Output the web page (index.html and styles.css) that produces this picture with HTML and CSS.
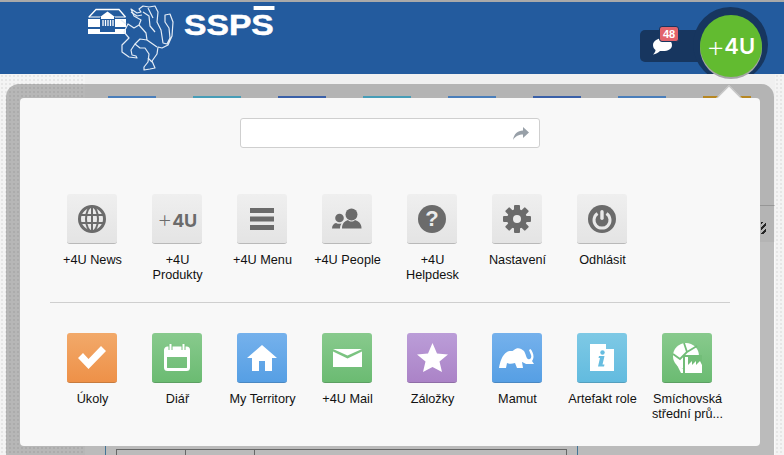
FILE: index.html
```html
<!DOCTYPE html>
<html lang="cs">
<head>
<meta charset="utf-8">
<title>+4U</title>
<link rel="stylesheet" href="styles.css">
</head>
<body>
<div class="page">
  <header class="header">
    <a class="logo">
      <svg class="crest" width="90" height="72" viewBox="88 0 90 72">
        <path d="M89 17 L96 9.500 H119 L125.500 17" fill="none" stroke="#fff" stroke-width="1.300"/>
        <path d="M88.500 17 H125.500" stroke="#fff" stroke-width="1"/>
        <rect x="88" y="19" width="38" height="8" fill="#fff"/>
        <rect x="88" y="29" width="38" height="5" fill="#fff"/>
        <rect x="100" y="16" width="15" height="16" fill="#235b9e"/>
        <path d="M100 17 L107.500 11.500 L115 17 Z" fill="#fff"/>
        <rect x="101" y="17" width="13" height="2" fill="#fff"/>
        <path d="M103 20 V26 M105.500 20 V26 M108 20 V26 M110.500 20 V26 M113 20 V26" stroke="#fff" stroke-width="1.300"/>
        <g fill="none" stroke="#e4ecf5" stroke-width="1.200" stroke-linejoin="round">
          <path d="M131 9 L137 13 L141 12 L139 9 L143 6 L149 7 L155 6 L158 12 L157 22 L161 30 L163 43 L167 44 L170 38 L169 28 L165 22 L165 15 L170 14 L173 22 L172 36 L168 45 L162 48 L158 47 L157 54 L152 61 L155 68 L150 69 L144 70 L144 67 L148 62 L149 54 L145 48 L140 48 L135 44 L131 50 L132 55 L136 56 L137 58 L129 57 L122 52 L122 45 L129 38 L124 32 L128 24 L134 28 L139 25 L141 20 L134 16 Z"/>
          <path d="M143 12 L149 16 L150 26 L155 32 M139 25 L146 33 L147 40 L157 47 M135 44 L140 39 L147 40 M148 8 L153 18 M152 62 L148 58"/>
          <path d="M131 12 L137 16 L142 15 M126 24 L121 20"/>
        </g>
      </svg>
      <span class="wordmark">SSPS</span>
    </a>
    <div class="actions">
      <div class="messages">
        <svg class="bubble" width="19" height="17" viewBox="0 0 19 17">
          <path d="M10 0 C15 0 19 3 19 7 C19 11 15 13 10 13 C9 13 8 13 7 13 C5 15 3 16 0 16.500 C1.500 15 2.500 13.500 2.500 12 C1 11 0 9 0 7 C0 3 5 0 10 0 Z" fill="#fff"/>
        </svg>
        <span class="badge">48</span>
      </div>
      <div class="orb"><span class="orb-inner"><span class="plus">+</span>4U</span></div>
    </div>
  </header>
  <div class="backdrop">
    <div class="texture"></div>
    <main class="main">
      <div class="tabs">
        <i class="tab blue"></i><i class="tab teal"></i><i class="tab navy"></i><i class="tab teal"></i>
        <i class="tab blue"></i><i class="tab navy"></i><i class="tab blue"></i><i class="tab amber"></i>
      </div>
      <div class="rule"></div>
      <div class="hatch"></div>
      <div class="lower">
        <div class="grid-lines">
          <span class="blue-tick"></span>
          <span class="blue-tick second"></span>
          <div class="grid-table"><i></i><i></i><i></i></div>
        </div>
      </div>
    </main>
    <div class="texture narrow"></div>
  </div>

  <div class="overlay">
    <div class="pointer"></div>
    <section class="panel">
      <div class="search">
        <input class="search-input" type="text" aria-label="Hledat">
        <svg class="search-go" width="16" height="13" viewBox="0 0 16 13">
          <path d="M10 0 L16 5.500 L10 11 V7.500 C6 7.500 2.500 9 0 13 C1 7 4.500 3.500 10 3.500 Z" fill="#98a0a8"/>
        </svg>
      </div>

      <ul class="row system">
        <li class="item"><span class="tile grey">
          <svg width="28" height="28" viewBox="0 0 28 28" fill="none" stroke="#6b6b6b"><circle cx="14" cy="14" r="12.500" stroke-width="3"/><ellipse cx="14" cy="14" rx="6" ry="12.500" stroke-width="2"/><path d="M14 2 V26 M2.500 10 H25.500 M2.500 18 H25.500" stroke-width="2"/></svg>
        </span><span class="label">+4U News</span></li>
        <li class="item"><span class="tile grey">
          <span class="mini-brand"><span class="plus">+</span>4U</span>
        </span><span class="label">+4U Produkty</span></li>
        <li class="item"><span class="tile grey">
          <svg width="24" height="22" viewBox="0 0 24 22" fill="#6b6b6b"><rect width="24" height="5"/><rect y="8.500" width="24" height="5"/><rect y="17" width="24" height="5"/></svg>
        </span><span class="label">+4U Menu</span></li>
        <li class="item"><span class="tile grey">
          <svg width="30" height="21" viewBox="0 0 30 21" fill="#6b6b6b"><circle cx="19.500" cy="6.500" r="6"/><path d="M10 20.500 C10 15 13 13 16 12 C18 14 21 14 23 12 C26 13 29.500 15 29.500 20.500 Z"/><circle cx="7.500" cy="10" r="4.300"/><path d="M0 20.500 C0 17 2 15.500 4 15 C6 16 8 16 9.500 15.500 C8.500 17 8 18.500 8 20.500 Z"/></svg>
        </span><span class="label">+4U People</span></li>
        <li class="item"><span class="tile grey">
          <span class="help">?</span>
        </span><span class="label">+4U Helpdesk</span></li>
        <li class="item"><span class="tile grey">
          <svg width="28" height="28" viewBox="0 0 28 28"><g fill="#6b6b6b"><circle cx="14" cy="14" r="10"/><rect x="11" y="0" width="6" height="28" rx="1"/><rect x="11" y="0" width="6" height="28" rx="1" transform="rotate(45 14 14)"/><rect x="11" y="0" width="6" height="28" rx="1" transform="rotate(90 14 14)"/><rect x="11" y="0" width="6" height="28" rx="1" transform="rotate(135 14 14)"/></g><circle cx="14" cy="14" r="4" fill="#ebebeb"/></svg>
        </span><span class="label">Nastavení</span></li>
        <li class="item"><span class="tile grey">
          <svg width="28" height="28" viewBox="0 0 28 28"><circle cx="14" cy="14" r="14" fill="#6b6b6b"/><path d="M9.500 8.500 A8 8 0 1 0 18.500 8.500" fill="none" stroke="#e8e8e8" stroke-width="3"/><rect x="12.300" y="5" width="3.400" height="10" rx="1.700" fill="#e8e8e8"/></svg>
        </span><span class="label">Odhlásit</span></li>
      </ul>

      <div class="divider"></div>

      <ul class="row apps">
        <li class="item"><span class="tile orange">
          <svg width="28" height="23" viewBox="0 0 28 23"><path d="M0 12 L5 7 L10.500 13 L23 0 L28 5 L10.500 23 Z" fill="#fff"/></svg>
        </span><span class="label">Úkoly</span></li>
        <li class="item"><span class="tile green">
          <svg width="26" height="27" viewBox="0 0 26 27"><path d="M3.500 4 H22.500 A2 2 0 0 1 24.500 6 V23.500 A2 2 0 0 1 22.500 25.500 H3.500 A2 2 0 0 1 1.500 23.500 V6 A2 2 0 0 1 3.500 4 Z" fill="none" stroke="#fff" stroke-width="3"/><rect x="1" y="4" width="24" height="9" fill="#fff"/><rect x="4.500" y="0" width="4" height="6" fill="#78c07e"/><rect x="17.500" y="0" width="4" height="6" fill="#78c07e"/><rect x="5.500" y="0" width="2" height="6" fill="#fff"/><rect x="18.500" y="0" width="2" height="6" fill="#fff"/></svg>
        </span><span class="label">Diář</span></li>
        <li class="item"><span class="tile blue-t">
          <svg width="30" height="26" viewBox="0 0 30 26"><path d="M15 0 L30 13 H25 V26 H18 V16 H12 V26 H5 V13 H0 Z" fill="#fff"/></svg>
        </span><span class="label">My Territory</span></li>
        <li class="item"><span class="tile green">
          <svg width="29" height="18" viewBox="0 0 29 18" fill="#fff"><path d="M0 0 H29 L14.500 6.500 Z"/><path d="M0 2.500 L14.500 9.500 L29 2.500 V18 H0 Z"/></svg>
        </span><span class="label">+4U Mail</span></li>
        <li class="item"><span class="tile purple">
          <svg width="31" height="29" viewBox="0 0 31 29"><path d="M15.500 0 L20 10.500 L31 11.500 L22.500 18.500 L25 29 L15.500 24 L6 29 L8.500 18.500 L0 11.500 L11 10.500 Z" fill="#fff"/></svg>
        </span><span class="label">Záložky</span></li>
        <li class="item"><span class="tile blue-t">
          <svg width="36" height="21" viewBox="0 0 36 21"><path d="M0 21 C1 15 3 8 8 5 C11 3 13 5 15 3 C18 0 22 1 25 4 C27 7 27 11 29 12 C31 13 33 11 32 8 L30 3 L31.500 2 C34 5 36 10 33 14 L35 17 H27 C25 16 24 15 23 15 L24 21 H18 L16 16 C13 17 10 17 8 16 L7 21 Z" fill="#fff"/></svg>
        </span><span class="label">Mamut</span></li>
        <li class="item"><span class="tile sky">
          <svg width="24" height="27" viewBox="0 0 24 27"><path d="M0 0 H16 V5 H24 V27 H0 Z" fill="#fff"/><circle cx="12.500" cy="8.500" r="2.200" fill="#67bde0"/><path d="M9 12 H14.500 L12.500 20.500 H14.500 L14 22.500 H8 L10 14 H8.500 Z" fill="#67bde0"/></svg>
        </span><span class="label">Artefakt role</span></li>
        <li class="item"><span class="tile green">
          <svg width="30" height="30" viewBox="0 0 30 30"><circle cx="14" cy="13" r="13" fill="#fff"/><path d="M12 0 L15 9 L8 16 L1 11 M15 9 L25 3" fill="none" stroke="#72bd78" stroke-width="1.800"/><path d="M11 12 H30 V30 H11 Z" fill="#72bd78"/><path d="M13 30 V14 H16 V22 L20 18 V22 L24 18 V22 L28 18 L30 22 V30 Z" fill="#fff"/><path d="M5 22 L11 26 V30 H9 Z" fill="#fff"/></svg>
        </span><span class="label two-line">Smíchovská střední prů...</span></li>
      </ul>
    </section>
  </div>
</div>
</body>
</html>
```
FILE: styles.css
```css
* { box-sizing: border-box; }
html, body { margin: 0; height: 100%; }
body {
  font-family: "Liberation Sans", Arial, sans-serif;
  overflow: hidden;
  background: #f0f0f0;
}
.page { position: relative; width: 784px; height: 455px; overflow: hidden; display: flex; flex-direction: column; }

.header {
  flex: none;
  height: 74px;
  border-top: 2px solid #a9a9a9;
  background: #235b9e;
  display: flex;
  justify-content: space-between;
  padding-left: 88px;
  position: relative;
  z-index: 3;
}
.logo { display: flex; align-items: flex-start; }
.crest { margin-top: -2px; flex: none; }
.wordmark {
  position: relative;
  margin-left: 6px;
  margin-top: 5px;
  width: 78px;
  color: #fff;
  font: 700 29px/36px "Liberation Sans", sans-serif;
  -webkit-text-stroke: 0.5px #fff;
  white-space: nowrap;
  transform: scaleX(1.160);
  transform-origin: left top;
}
.wordmark::before {
  content: "";
  position: absolute;
  right: 0;
  top: -1px;
  width: 18px;
  height: 4px;
  background: #fff;
}
.actions { display: flex; align-items: flex-start; padding-right: 16px; }
.messages {
  position: relative;
  margin-top: 28px;
  width: 68px;
  height: 32px;
  background: #17365f;
  border-radius: 5px;
  margin-right: -15px;
}
.bubble { position: absolute; left: 13px; top: 8px; }
.badge {
  position: absolute;
  left: 19px;
  top: -4px;
  width: 20px;
  height: 16px;
  background: #e2636b;
  border: 1px solid #17365f;
  border-radius: 3px;
  color: #fff;
  font: 700 11px/14px "Liberation Sans", sans-serif;
  text-align: center;
}
.orb {
  position: relative;
  width: 75px;
  height: 75px;
  margin-top: 5px;
  padding-top: 8px;
  flex: none;
}
.orb::before {
  content: "";
  position: absolute;
  inset: 0;
  border-radius: 50%;
  background: #17365f;
  clip-path: inset(0 0 8px 0);
}
.orb-inner {
  position: relative;
  display: flex;
  width: 62px;
  height: 62px;
  margin: 0 auto;
  align-items: center;
  justify-content: center;
  background: #62bb30;
  border-radius: 50%;
  color: #fff;
  font: 600 22px/1 "Inter", "Liberation Sans", sans-serif;
  box-shadow: 0 2px 0 #a5a5a5;
}
.orb-inner .plus { font-size: 30px; font-weight: 200; margin-right: -1px; }

.backdrop { flex: 1; display: flex; min-height: 0; }
.texture {
  width: 85px;
  flex: none;
  background-color: #f4f4f4;
  background-image: radial-gradient(#e6e6e6 1px, transparent 1.500px);
  background-size: 4px 4px;
}
.texture.narrow { width: 9px; }
.main { flex: 1; background: #f0f0f0; position: relative; display: flex; flex-direction: column; }
.tabs { display: flex; gap: 37px; margin: 22px 0 0 23px; flex: none; }
.tab { display: block; width: 48px; height: 2px; }
.tab.blue { background: #63a9f8; }
.tab.teal { background: #5fd2f5; }
.tab.navy { background: #4e80e0; }
.tab.amber { background: #f5b52e; }
.rule { height: 1px; background: #c9c9c9; margin-top: 107px; flex: none; }
.hatch {
  align-self: flex-end;
  width: 5px;
  height: 12px;
  margin: 16px 9px 0 0;
  background: repeating-linear-gradient(135deg, #333 0 2px, transparent 2px 4px);
  flex: none;
}
.lower { flex: 1; background: #fafafa; margin-top: 8px; position: relative; }
.grid-lines { position: absolute; left: 0; right: 0; bottom: 0; height: 9px; }
.blue-tick { position: absolute; left: 20px; top: 0; bottom: 0; width: 1px; background: #5a9bc9; }
.blue-tick.second { left: 492px; }
.grid-table {
  position: absolute;
  left: 31px;
  width: 451px;
  top: 3px;
  bottom: 0;
  border-top: 1px solid #8a8a8a;
  border-right: 1px solid #8a8a8a;
  display: flex;
}
.grid-table i { width: 69px; border-left: 1px solid #8a8a8a; display: block; }

.overlay {
  position: absolute;
  left: 6px;
  top: 84px;
  width: 768px;
  height: 380px;
  background: rgba(0, 0, 0, 0.25);
  border-radius: 13px 13px 0 0;
  padding: 14px 14px 18px;
  z-index: 2;
}
.pointer {
  position: absolute;
  left: 714px;
  top: 5px;
  width: 18px;
  height: 18px;
  background: #f8f8f8;
  transform: rotate(45deg);
  border-top: 1px solid #c4c4c4;
  border-left: 1px solid #c4c4c4;
}
.panel {
  position: relative;
  height: 348px;
  background: #f8f8f8;
  border-radius: 4px;
  padding: 20px 30px 0;
}
.search { position: relative; width: 300px; height: 30px; margin: 0 auto 0 190px; }
.search-input {
  display: block;
  width: 100%;
  height: 100%;
  border: 1px solid #cfcfcf;
  border-radius: 3px;
  background: #fff;
  padding: 0 34px 0 8px;
}
.search-go { position: absolute; right: 11px; top: 9px; }

.row { list-style: none; margin: 0; padding: 0; display: grid; grid-template-columns: repeat(8, 85px); }
.system { margin-top: 46px; height: 108px; }
.apps { margin-top: 30px; }
.divider { height: 1px; background: #cfcfcf; }
.item { display: flex; flex-direction: column; align-items: center; padding: 0 4px; }
.tile {
  display: flex;
  align-items: center;
  justify-content: center;
  width: 50px;
  height: 50px;
  margin-left: -1px;
  border-radius: 3px;
  flex: none;
}
.tile svg { display: block; }
.grey { background: linear-gradient(#efefef, #e4e4e4); border-bottom: 1px solid #b9b9b9; }
.orange { background: linear-gradient(#f2a96a, #ee9148); border-bottom: 1px solid #c77b3e; }
.green { background: linear-gradient(#88ca8d, #6bbb72); border-bottom: 1px solid #5c9f62; }
.blue-t { background: linear-gradient(#75b1ec, #569fe4); border-bottom: 1px solid #4a88c2; }
.purple { background: linear-gradient(#bb9dd8, #ab83c7); border-bottom: 1px solid #8f6da7; }
.sky { background: linear-gradient(#7ec9e5, #62bbdf); border-bottom: 1px solid #549fbe; }
.label {
  display: block;
  margin-top: 9px;
  font-size: 12.700px;
  line-height: 15px;
  color: #111;
  text-align: center;
}
.two-line { width: 76px; }
.mini-brand {
  color: #6b6b6b;
  font: 700 18px/1 "Inter", "Liberation Sans", sans-serif;
  letter-spacing: -0.300px;
  white-space: nowrap;
}
.mini-brand .plus { font-size: 24px; font-weight: 200; }
.help {
  display: block;
  width: 28px;
  height: 28px;
  border-radius: 50%;
  background: #6b6b6b;
  color: #ebebeb;
  font: 700 22px/28px "Liberation Sans", sans-serif;
  text-align: center;
}
```
